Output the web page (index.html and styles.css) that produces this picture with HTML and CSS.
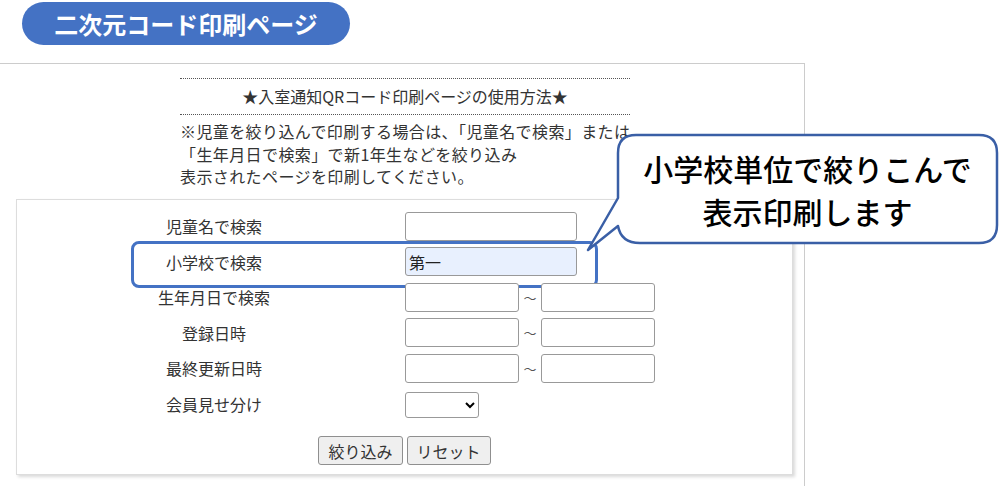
FILE: index.html
```html
<!DOCTYPE html>
<html lang="ja">
  <head>
    <meta charset="UTF-8" />
    <meta name="viewport" content="width=device-width, initial-scale=1.0" />
    <title>二次元コード印刷ページ</title>
    <link rel="stylesheet" href="styles.css">
  </head>
  <body>
    <div class="title-pill">二次元コード印刷ページ</div>

    <div class="page">
      <div class="guide">
        <div class="guide-head">★入室通知QRコード印刷ページの使用方法★</div>
        <p class="guide-text">
          ※児童を絞り込んで印刷する場合は、「児童名で検索」または<br />
          「生年月日で検索」で新1年生などを絞り込み<br />
          表示されたページを印刷してください。
        </p>
      </div>

      <form class="search-box" onsubmit="return false;">
        <div class="row">
          <label class="label">児童名で検索</label>
          <input type="text" class="field" />
        </div>
        <div class="row row-mark">
          <label class="label">小学校で検索</label>
          <input type="text" class="field field-filled" value="第一" />
        </div>
        <div class="row">
          <label class="label">生年月日で検索</label>
          <input type="text" class="field field-date" />
          <span class="wave">〜</span>
          <input type="text" class="field field-date" />
        </div>
        <div class="row">
          <label class="label">登録日時</label>
          <input type="text" class="field field-date" />
          <span class="wave">〜</span>
          <input type="text" class="field field-date" />
        </div>
        <div class="row">
          <label class="label">最終更新日時</label>
          <input type="text" class="field field-date" />
          <span class="wave">〜</span>
          <input type="text" class="field field-date" />
        </div>
        <div class="row">
          <label class="label">会員見せ分け</label>
          <select class="picker">
            <option></option>
          </select>
        </div>
        <div class="button-panel">
          <button type="submit" class="button">絞り込み</button>
          <button type="reset" class="button">リセット</button>
        </div>
      </form>
    </div>

    <div class="callout">
      <svg class="callout-shape" width="419" height="130" viewBox="0 0 419 130">
        <path d="M56 5 H399 Q417 5 417 23 V95 Q417 113 399 113 H60 Q41 113 38 96 L8 120 L38 68 V23 Q38 5 56 5 Z"
              fill="#ffffff" stroke="#3a5fa6" stroke-width="2.5" stroke-linejoin="round" />
      </svg>
      <div class="callout-text">小学校単位で絞りこんで<br />表示印刷します</div>
    </div>
  </body>
</html>
```

FILE: styles.css
```css
* {
  margin: 0;
  padding: 0;
  box-sizing: border-box;
}

body {
  font-family: "Noto Sans CJK JP", sans-serif;
  background: #ffffff;
  color: #333333;
  width: 999px;
  height: 486px;
  overflow: hidden;
  position: relative;
}

.title-pill {
  margin: 2px 0 0 22px;
  width: 328px;
  height: 43px;
  border-radius: 22px;
  background: #4472c4;
  color: #ffffff;
  font-size: 24px;
  font-weight: 700;
  line-height: 43px;
  text-align: center;
}

.page {
  margin-top: 18px;
  width: 805px;
  height: 440px;
  border-top: 1px solid #cccccc;
  border-right: 1px solid #cccccc;
  padding-top: 14px;
}

.guide {
  width: 450px;
  margin-left: 180px;
  border-top: 1px dotted #555555;
}

.guide-head {
  height: 36px;
  line-height: 35px;
  text-align: center;
  font-size: 16px;
  border-bottom: 1px dotted #555555;
}

.guide-text {
  margin-top: 5px;
  font-size: 16px;
  line-height: 22.5px;
  letter-spacing: 0.4px;
  white-space: nowrap;
}

.search-box {
  margin: 11px 0 0 16px;
  width: 777px;
  height: 276px;
  border: 1px solid #dddddd;
  box-shadow: 2px 2px 3px rgba(0, 0, 0, 0.15);
  padding: 12px 0 0 99px;
  display: flex;
  flex-direction: column;
  gap: 6.6px;
}

.row {
  display: flex;
  align-items: center;
  height: 29px;
  position: relative;
}

.row-mark::before {
  content: "";
  position: absolute;
  left: 15px;
  top: -6px;
  width: 461px;
  height: 41px;
  border: 3px solid #4472c4;
  border-radius: 8px;
  pointer-events: none;
}

.label {
  width: 196px;
  margin-right: 93px;
  text-align: center;
  font-size: 16px;
  color: #333333;
}

.field {
  width: 172px;
  height: 29px;
  border: 1px solid #999999;
  border-radius: 3px;
  padding: 0 3px;
  font-family: inherit;
  font-size: 16px;
  color: #222222;
  background: #ffffff;
}

.field-filled {
  background: #e8f0fe;
}

.field-date {
  width: 114px;
}

.wave {
  width: 22px;
  text-align: center;
  font-size: 13px;
  color: #555555;
}

.picker {
  width: 74px;
  height: 26px;
  margin-top: 3px;
  border: 1px solid #999999;
  border-radius: 3px;
  background: #ffffff;
  font-family: inherit;
  font-size: 16px;
}

.button-panel {
  margin: 11px 0 0 -99px;
  display: flex;
  justify-content: center;
  gap: 4px;
}

.button {
  height: 29px;
  padding: 0 9px;
  border: 1px solid #8f8f8f;
  border-radius: 3px;
  background: #efefef;
  font-family: inherit;
  font-size: 16px;
  color: #333333;
  cursor: pointer;
}

/* 吹き出し */
.callout {
  position: absolute;
  left: 580px;
  top: 130px;
  width: 419px;
  height: 130px;
}

.callout-shape {
  display: block;
}

.callout-text {
  position: absolute;
  left: 38px;
  top: 5px;
  width: 379px;
  height: 108px;
  padding-top: 12px;
  text-align: center;
  font-size: 30px;
  font-weight: 500;
  line-height: 43px;
  color: #000000;
}
```
